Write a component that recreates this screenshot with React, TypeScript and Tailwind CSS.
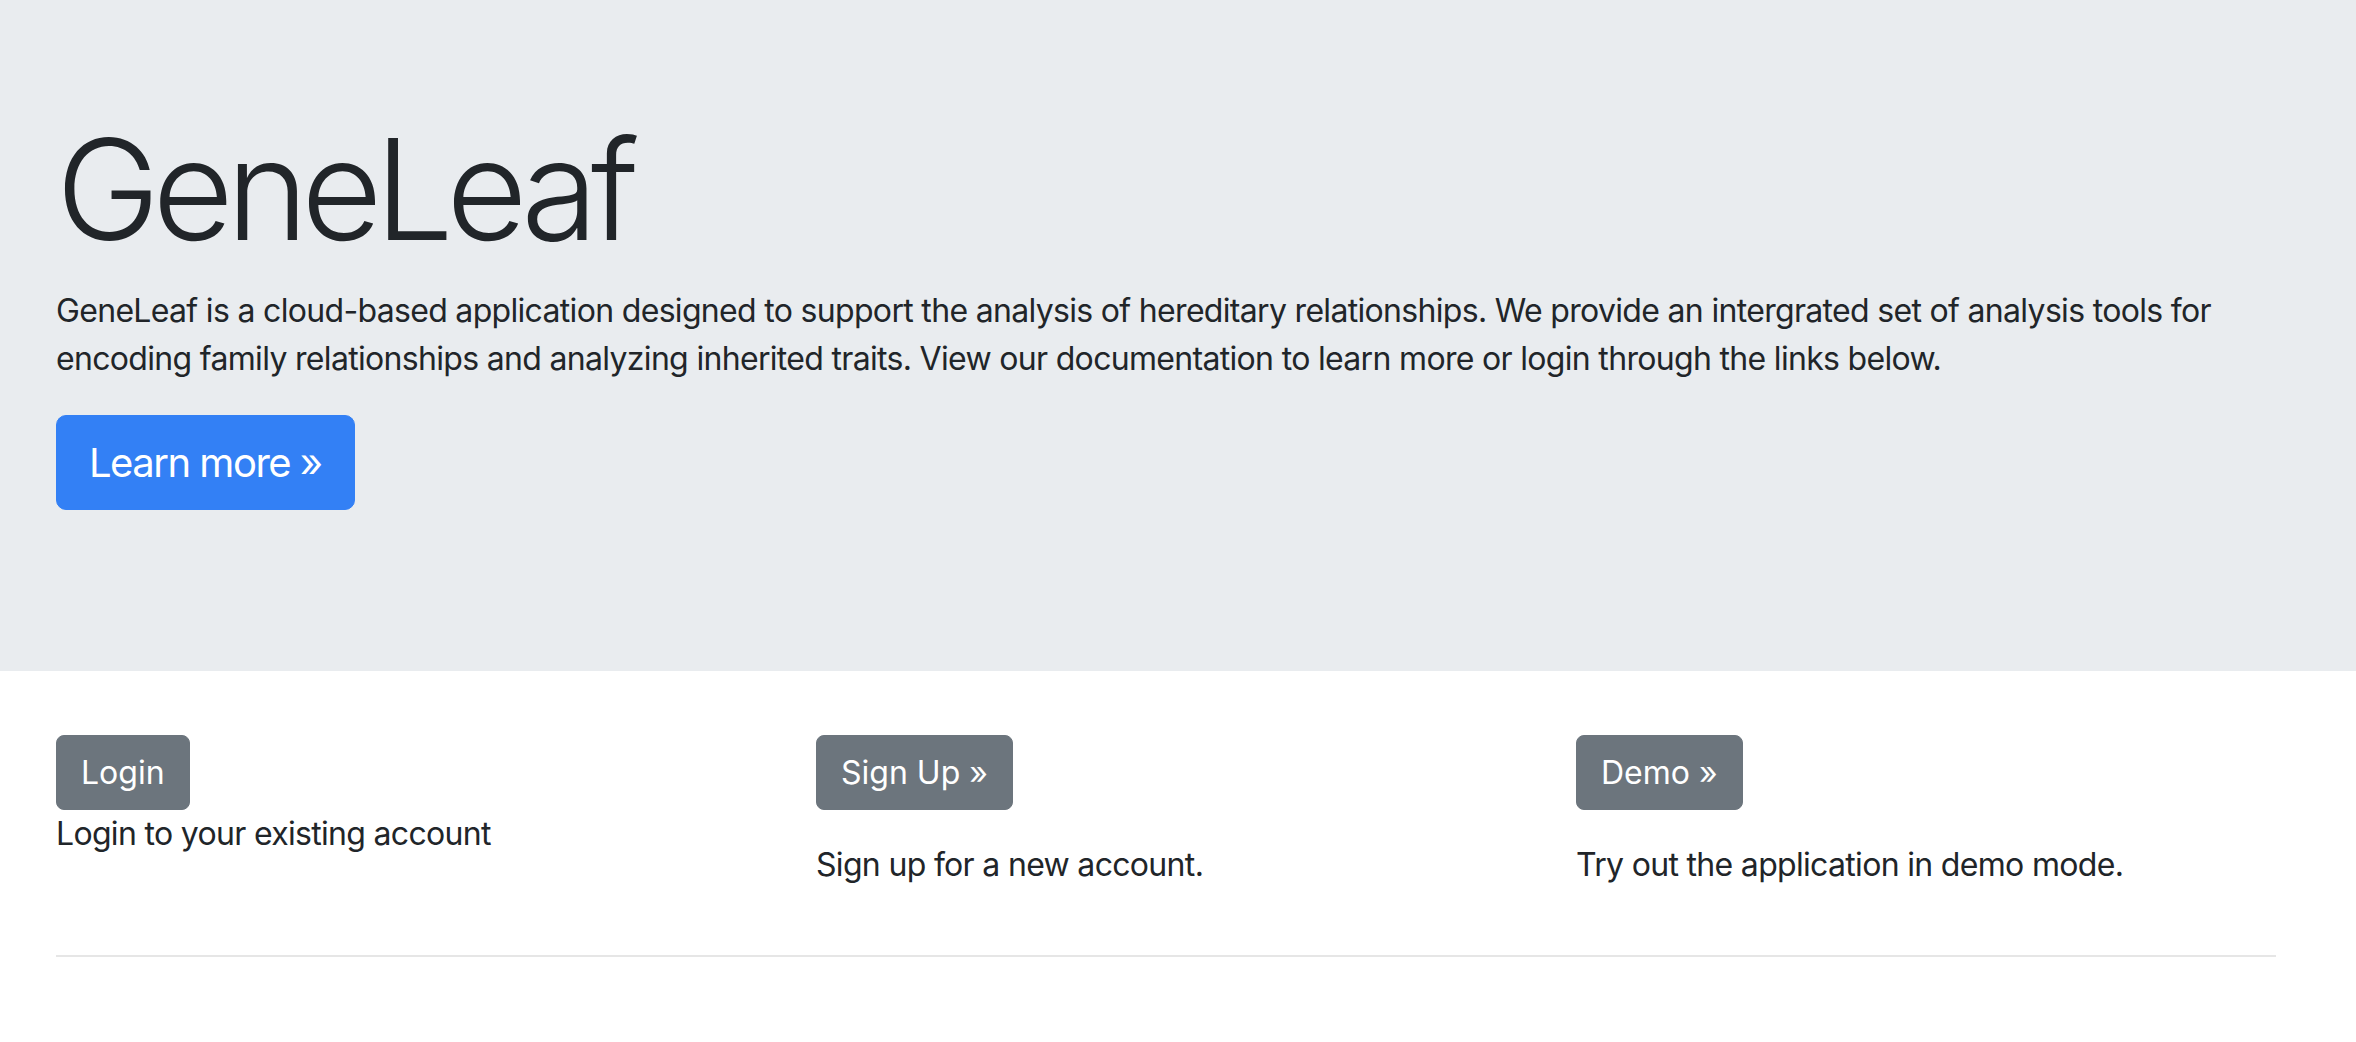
export default function App() {
  return (
    <div className="min-h-screen bg-white text-[#212529] font-['Inter','Liberation_Sans',sans-serif]">
      <section className="bg-[#e9ecef] px-[56px] pt-[105px] pb-[161px]">
        <h1 className="text-[140px] font-light leading-[1.2] tracking-[-7.5px]">GeneLeaf</h1>
        <p className="mt-[14px] mb-8 w-[2220px] text-[32px] leading-[48px] tracking-[-0.68px]">
          GeneLeaf is a cloud-based application designed to support the analysis of hereditary relationships. We
          provide an intergrated set of analysis tools for encoding family relationships and analyzing inherited
          traits. View our documentation to learn more or login through the links below.
        </p>
        <a
          href="#"
          className="inline-block rounded-[10px] border border-[#3380f5] bg-[#3380f5] px-8 py-4 text-[40px] leading-[61px] tracking-[-1.5px] text-white"
        >
          Learn more »
        </a>
      </section>

      <section className="pl-[56px] pr-[20px] pt-16">
        <div className="flex">
          <div className="w-[760px] shrink-0">
            <a
              href="#"
              className="inline-block rounded-lg border border-[#6c757d] bg-[#6c757d] px-6 py-3 text-[32px] leading-[49px] text-white"
            >
              Login
            </a>
            <p className="text-[32px] leading-[48px] tracking-[-0.68px]">Login to your existing account</p>
          </div>
          <div className="w-[760px] shrink-0">
            <a
              href="#"
              className="inline-block rounded-lg border border-[#6c757d] bg-[#6c757d] px-6 py-3 text-[32px] leading-[49px] text-white"
            >
              Sign Up »
            </a>
            <p className="mt-[31px] text-[32px] leading-[48px] tracking-[-0.68px]">Sign up for a new account.</p>
          </div>
          <div className="w-[760px] shrink-0">
            <a
              href="#"
              className="inline-block rounded-lg border border-[#6c757d] bg-[#6c757d] px-6 py-3 text-[32px] leading-[49px] text-white"
            >
              Demo »
            </a>
            <p className="mt-[31px] text-[32px] leading-[48px] tracking-[-0.68px]">
              Try out the application in demo mode.
            </p>
          </div>
        </div>
        <hr className="mt-[66px] w-[2220px] border-0 border-t-2 border-[#e6e6e6]" />
      </section>
    </div>
  )
}
